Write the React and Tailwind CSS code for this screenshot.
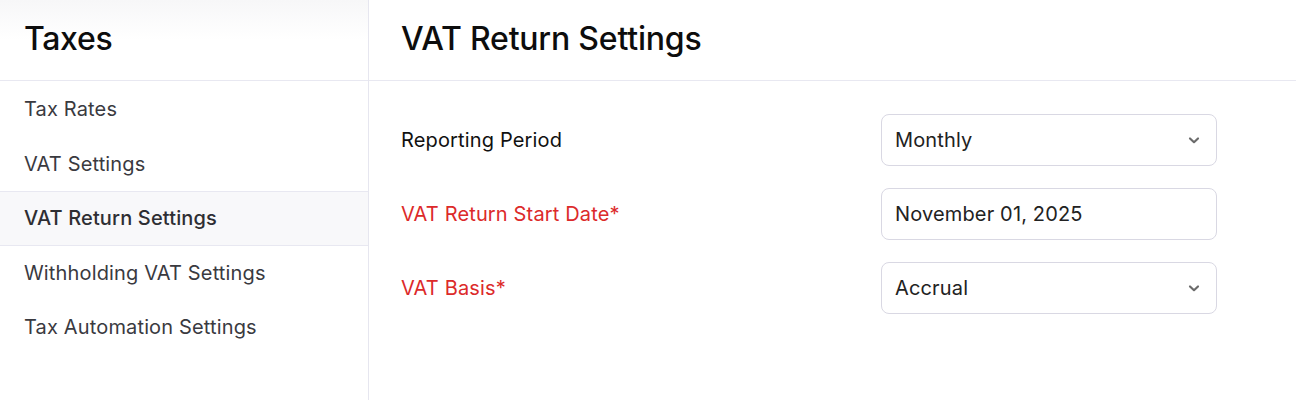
import React from "react";

const Chevron = () => (
  <svg width="14" height="14" viewBox="0 0 14 14" fill="none" className="shrink-0">
    <path d="M3 5.5 L7 9.2 L11 5.5" stroke="#6b6b6b" strokeWidth="2.2" strokeLinecap="round" strokeLinejoin="round" />
  </svg>
);

const navItems = [
  "Tax Rates",
  "VAT Settings",
  "VAT Return Settings",
  "Withholding VAT Settings",
  "Tax Automation Settings",
];

function Field({ label, required, value, select }) {
  return (
    <div className="flex items-center h-[52px]">
      <div className={`w-[480px] text-[20px] tracking-[0.15px] ${required ? "text-[#dc2a2a]" : "text-[#111111]"}`}>
        {label}
      </div>
      <div className="w-[336px] h-[52px] rounded-[8px] border border-[#d9d8e3] bg-white flex items-center justify-between pl-[13px] pr-[15px] text-[20px] tracking-[0.15px] text-[#222222]">
        <span>{value}</span>
        {select && <Chevron />}
      </div>
    </div>
  );
}

export default function App() {
  return (
    <div
      className="w-[1298px] h-[400px] flex bg-white overflow-hidden"
      style={{ fontFamily: "Inter, 'Noto Sans', sans-serif" }}
    >
      <aside className="w-[369px] shrink-0 border-r border-[#e6e6ef] flex flex-col">
        <div className="h-[81px] border-b border-[#e8e8f1] bg-gradient-to-b from-[#f7f7f8] via-white to-white flex items-center px-[24px]">
          <h1 className="text-[32px] font-medium text-[#0d0d0d] leading-none tracking-[-0.3px] -mt-[2px]">Taxes</h1>
        </div>
        <nav className="flex flex-col pt-[1px]">
          {navItems.map((item) => {
            const active = item === "VAT Return Settings";
            return (
              <div
                key={item}
                className={`h-[54.5px] flex items-center px-[24px] text-[20px] tracking-[0.15px] ${
                  active
                    ? "bg-[#f8f8fa] border-y border-[#e8e8f1] font-medium text-[#2e2e33]"
                    : "text-[#3a3a3f]"
                }`}
              >
                {item}
              </div>
            );
          })}
        </nav>
      </aside>
      <main className="flex-1 flex flex-col">
        <div className="h-[81px] border-b border-[#e8e8f1] mr-[2px] flex items-center px-[32px]">
          <h2 className="text-[32px] font-medium text-[#0d0d0d] leading-none tracking-[-0.2px] -mt-[2px]">VAT Return Settings</h2>
        </div>
        <div className="pt-[33px] px-[32px] flex flex-col gap-[22px]">
          <Field label="Reporting Period" value="Monthly" select />
          <Field label="VAT Return Start Date*" required value="November 01, 2025" />
          <Field label="VAT Basis*" required value="Accrual" select />
        </div>
      </main>
    </div>
  );
}
